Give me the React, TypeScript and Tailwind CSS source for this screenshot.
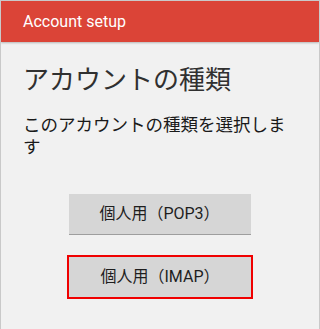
import React from "react"

const font = { fontFamily: "Roboto, 'Noto Sans CJK JP', sans-serif" }

const App = () => {
    return (
        <div
            className="w-[320px] h-[329px] overflow-hidden flex flex-col bg-[#f1f1f1] border-x border-t border-[#c9c9c9]"
            style={font}
        >
            <div className="h-[41px] shrink-0 bg-[#db4437] flex items-center px-[22px] shadow-[0_1px_2px_rgba(0,0,0,0.25)] relative">
                <span className="text-white text-[16px] leading-none">Account setup</span>
            </div>
            <div className="flex flex-col px-[22px] pt-[22px]">
                <h1 className="text-[26px] leading-[32px] text-[#303030]">アカウントの種類</h1>
                <p className="mt-[18px] text-[17.5px] leading-[22px] text-[#1a1a1a]">
                    このアカウントの種類を選択します
                </p>
            </div>
            <div className="flex flex-col items-center mt-[36px] gap-[23px]">
                <button className="w-[182px] h-[40px] bg-[#d6d6d6] text-[16px] text-[#1e1e1e] shadow-[0_1px_0_#9e9e9e] ml-[-1px]">
                    個人用（POP3）
                </button>
                <button className="w-[182px] h-[40px] bg-[#d6d6d6] text-[16px] text-[#1e1e1e] outline-2 outline-[#f00000] outline-offset-0">
                    個人用（IMAP）
                </button>
            </div>
        </div>
    )
}

export default App
